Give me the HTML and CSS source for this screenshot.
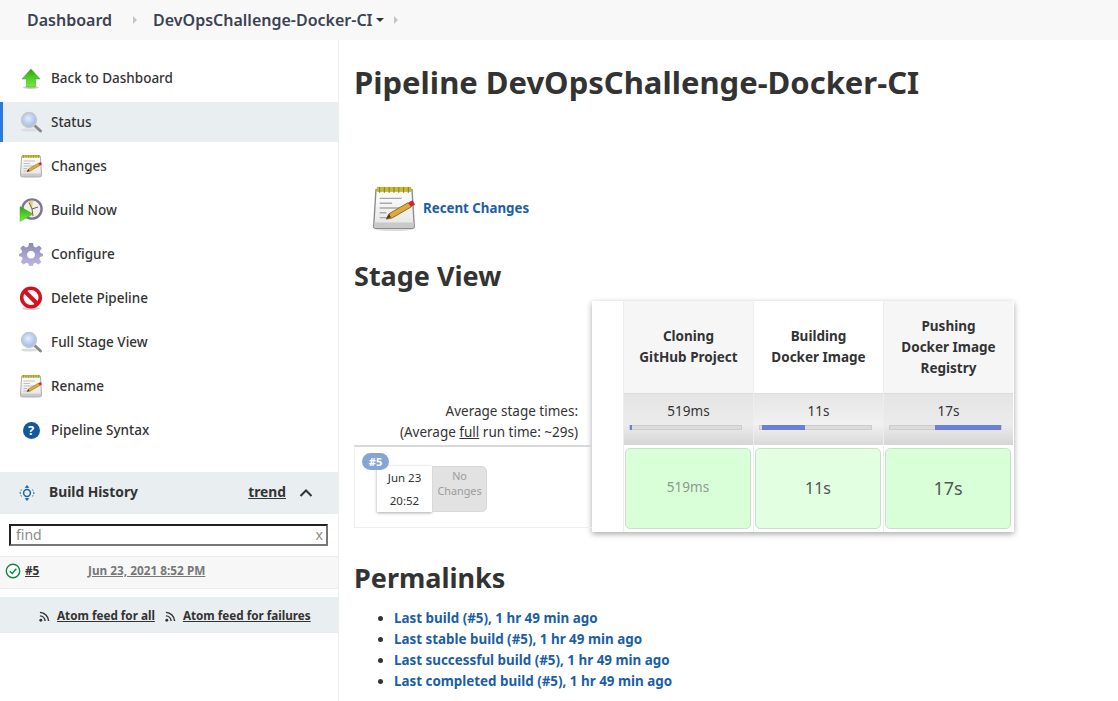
FILE: index.html
```html
<!DOCTYPE html>
<html lang="en">
<head>
<meta charset="utf-8">
<title>DevOpsChallenge-Docker-CI</title>
<link rel="stylesheet" href="styles.css">
</head>
<body>
<svg class="defs" width="0" height="0" aria-hidden="true">
  <defs>
    <linearGradient id="gGreen" x1="0" y1="0" x2="0" y2="1"><stop offset="0" stop-color="#2f9e1a"/><stop offset=".5" stop-color="#4ccf22"/><stop offset="1" stop-color="#7fe83f"/></linearGradient>
    <linearGradient id="gPaper" x1="0" y1="0" x2="0" y2="1"><stop offset="0" stop-color="#fff"/><stop offset="1" stop-color="#e4e4e4"/></linearGradient>
    <linearGradient id="gPurple" x1="0" y1="0" x2="0" y2="1"><stop offset="0" stop-color="#8c88bd"/><stop offset="1" stop-color="#bdb8dc"/></linearGradient>
    <radialGradient id="gLens" cx=".45" cy=".4" r=".7"><stop offset="0" stop-color="#e4edfa"/><stop offset="1" stop-color="#8fb0e6"/></radialGradient>
    <symbol id="i-up" viewBox="0 0 24 24">
      <ellipse cx="12" cy="21.5" rx="8" ry="1.5" fill="#ccc"/>
      <path d="M12 3 21 13H16.5V21H7.5V13H3Z" fill="url(#gGreen)" stroke="#3a9e24" stroke-width=".5"/>
    </symbol>
    <symbol id="i-search" viewBox="0 0 24 24">
      <ellipse cx="10" cy="20" rx="8" ry="1.6" fill="#ddd"/>
      <path d="M14.5 14.5 21.5 21" stroke="#8a8a8a" stroke-width="3" stroke-linecap="round"/>
      <circle cx="10" cy="10" r="7.3" fill="url(#gLens)" stroke="#c4c8d0" stroke-width="1.8"/>
    </symbol>
    <symbol id="i-notepad" viewBox="0 0 24 24">
      <ellipse cx="12" cy="23" rx="10" ry="1" fill="#ddd"/>
      <path d="M2.6 2.5H21.4L22.6 21.5Q22.6 22.6 21.4 22.6H2.6Q1.4 22.6 1.4 21.5Z" fill="url(#gPaper)" stroke="#8a8a8a" stroke-width=".7"/>
      <path d="M1.6 19.5H22.4V21.6Q22.4 22.4 21.4 22.4H2.6Q1.6 22.4 1.6 21.6Z" fill="#c9c9c9"/>
      <rect x="3" y="1" width="18" height="2.6" fill="#c9b832"/>
      <path d="M4.5 1V4M7 1V4M9.5 1V4M12 1V4M14.5 1V4M17 1V4M19.5 1V4" stroke="#8f8430" stroke-width=".6"/>
      <path d="M4.5 7H16M4.5 9.5H11M4.5 12H15M4.5 14.5H8M4.5 17H11" stroke="#a9a9a9" stroke-width=".7"/>
      <path d="M8 17.8 9.4 15 19.4 9.2 21 11.4 11 17.2Z" fill="#e0a93a" stroke="#8f6a1c" stroke-width=".5"/>
      <path d="M19.4 9.2 21.6 8 23 10.2 21 11.4Z" fill="#d8202c"/>
      <path d="M8 17.8 9.4 15 10.4 16.8Z" fill="#4b3a1a"/>
    </symbol>
    <symbol id="i-clock" viewBox="0 0 24 24">
      <circle cx="13" cy="11" r="9.6" fill="#f3efe6" stroke="#7d7597" stroke-width="2.4"/>
      <path d="M13 11 9.5 3.500A8 8 0 0 1 14 3Z" fill="#e6d65f"/>
      <path d="M13 11 10 4.5M13 11 19 9M13 11 14 18" stroke="#555" stroke-width=".9"/>
      <path d="M1 8.500 14 16 1 23.500Z" fill="url(#gGreen)" stroke="#3c9a27" stroke-width=".4"/>
    </symbol>
    <symbol id="i-gear" viewBox="0 0 24 24">
      <path fill-rule="evenodd" fill="url(#gPurple)" d="M10 1H14L14.7 4.4 17 5.4 20 3.5 22.8 6.3 20.7 9.2 21.6 11 24 12 24 14 21 15 20.3 17 22.3 20 19.5 22.6 16.6 20.7 14.6 21.6 14 24H10L9.4 21.6 7.4 20.7 4.5 22.6 1.7 20 3.7 17 3 15 0 14V12L2.4 11 3.3 9.2 1.2 6.3 4 3.5 7 5.4 9.3 4.4ZM12 8.800A3.900 3.900 0 1 0 12.01 8.800Z"/>
    </symbol>
    <symbol id="i-stop" viewBox="0 0 24 24">
      <ellipse cx="12" cy="22.4" rx="9" ry="1.4" fill="#ccc"/>
      <circle cx="12" cy="11.5" r="9.300" fill="#fff" stroke="#d4121f" stroke-width="3.500"/>
      <path d="M5.5 5 18.5 18" stroke="#d4121f" stroke-width="4"/>
    </symbol>
    <symbol id="i-rss" viewBox="0 0 12 12">
      <circle cx="2" cy="10" r="1.6" fill="#333"/>
      <path d="M1 5.3A6 6 0 0 1 6.7 11M1 1.5A10 10 0 0 1 10.5 11" fill="none" stroke="#333" stroke-width="1.6"/>
    </symbol>
  </defs>
</svg>

<header class="crumbs">
  <a class="crumb" href="#">Dashboard</a>
  <span class="crumb-sep"></span>
  <a class="crumb" href="#">DevOpsChallenge-Docker-CI</a>
  <span class="crumb-caret"></span>
  <span class="crumb-sep crumb-sep-end"></span>
</header>

<div class="layout">
  <aside class="side">
    <nav class="tasks">
      <a class="task" href="#"><svg class="task-icon"><use href="#i-up"/></svg>Back to Dashboard</a>
      <a class="task task-active" href="#"><svg class="task-icon"><use href="#i-search"/></svg>Status</a>
      <a class="task" href="#"><svg class="task-icon"><use href="#i-notepad"/></svg>Changes</a>
      <a class="task" href="#"><svg class="task-icon"><use href="#i-clock"/></svg>Build Now</a>
      <a class="task" href="#"><svg class="task-icon"><use href="#i-gear"/></svg>Configure</a>
      <a class="task" href="#"><svg class="task-icon"><use href="#i-stop"/></svg>Delete Pipeline</a>
      <a class="task" href="#"><svg class="task-icon"><use href="#i-search"/></svg>Full Stage View</a>
      <a class="task" href="#"><svg class="task-icon"><use href="#i-notepad"/></svg>Rename</a>
      <a class="task" href="#"><span class="task-help"><span class="help-mark">?</span></span>Pipeline Syntax</a>
    </nav>

    <section class="history">
      <div class="history-head">
        <svg class="history-icon" viewBox="0 0 16 16"><circle cx="8" cy="8" r="3.4" fill="none" stroke="#1b64a8" stroke-width="1.5"/><path d="M8 .6 9.5 2.4H6.500ZM8 15.400 6.500 13.600H9.500ZM1.600 5.600 2.800 4.800M14.400 5.600 13.200 4.800M1.600 10.400 2.800 11.200M14.400 10.400 13.200 11.200M1.200 7V9M14.800 7V9" fill="#1b64a8" stroke="#1b64a8" stroke-width="1"/></svg>
        <span class="history-title">Build History</span>
        <a class="history-trend" href="#">trend</a>
        <svg class="history-chevron" viewBox="0 0 14 10"><path d="M1.500 8 7 2.500 12.500 8" fill="none" stroke="#333" stroke-width="2"/></svg>
      </div>
      <div class="find">
        <div class="find-box"><span class="find-text">find</span><span class="find-x">x</span></div>
      </div>
      <div class="build-row">
        <svg class="build-status" viewBox="0 0 16 16"><circle cx="8" cy="8" r="6.700" fill="#fff" stroke="#138347" stroke-width="1.400"/><path d="M4.800 8.200 7.200 10.500 11.300 5.800" fill="none" stroke="#138347" stroke-width="1.500"/></svg>
        <a class="build-num" href="#">#5</a>
        <a class="build-date" href="#">Jun 23, 2021 8:52 PM</a>
      </div>
      <div class="feeds">
        <svg class="feed-icon"><use href="#i-rss"/></svg><a class="feed-link" href="#">Atom feed for all</a>
        <svg class="feed-icon feed-icon-second"><use href="#i-rss"/></svg><a class="feed-link" href="#">Atom feed for failures</a>
      </div>
    </section>
  </aside>

  <main class="main">
    <h1 class="title">Pipeline DevOpsChallenge-Docker-CI</h1>
    <div class="recent">
      <svg class="recent-icon"><use href="#i-notepad"/></svg>
      <a class="link" href="#">Recent Changes</a>
    </div>
    <h2 class="heading">Stage View</h2>
    <div class="stage">
      <div class="stage-left">
        <div class="avg-label">
          <div>Average stage times:</div>
          <div>(Average <u>full</u> run time: ~29s)</div>
        </div>
        <div class="run">
          <span class="run-badge">#5</span>
          <div class="run-date"><span>Jun 23</span><span>20:52</span></div>
          <div class="run-changes">No<br>Changes</div>
        </div>
      </div>
      <div class="stage-card">
        <div class="blank"></div>
        <div class="col col-a">
          <div class="col-head">Cloning<br>GitHub Project</div>
          <div class="col-avg"><span>519ms</span><div class="bar"><i class="bar-fill" style="left:0;width:2%"></i></div></div>
          <div class="col-cell"><div class="cell cell-dim">519ms</div></div>
        </div>
        <div class="col col-b">
          <div class="col-head">Building<br>Docker Image</div>
          <div class="col-avg"><span>11s</span><div class="bar"><i class="bar-fill" style="left:1.500%;width:39%"></i></div></div>
          <div class="col-cell"><div class="cell cell-mid">11s</div></div>
        </div>
        <div class="col col-a">
          <div class="col-head">Pushing<br>Docker Image<br>Registry</div>
          <div class="col-avg"><span>17s</span><div class="bar"><i class="bar-fill" style="left:40.700%;width:59.300%"></i></div></div>
          <div class="col-cell"><div class="cell cell-big">17s</div></div>
        </div>
      </div>
    </div>
    <h2 class="heading heading-perma">Permalinks</h2>
    <ul class="permalinks">
      <li><a class="link" href="#">Last build (#5), 1 hr 49 min ago</a></li>
      <li><a class="link" href="#">Last stable build (#5), 1 hr 49 min ago</a></li>
      <li><a class="link" href="#">Last successful build (#5), 1 hr 49 min ago</a></li>
      <li><a class="link" href="#">Last completed build (#5), 1 hr 49 min ago</a></li>
    </ul>
  </main>
</div>
</body>
</html>
```
FILE: styles.css
```css
* { box-sizing: border-box; }
html, body { margin: 0; height: 100%; overflow: hidden; }
body {
  background: #fff;
  color: #333;
  font-family: "Noto Sans", "Open Sans", sans-serif;
  font-size: 13.500px;
}
a { color: inherit; }
.defs { position: absolute; }

.crumbs {
  height: 40px;
  background: #f8f8f8;
  display: flex;
  align-items: center;
  padding-left: 27px;
  font-size: 16px;
  font-weight: 600;
}
.crumb { color: #3b4252; text-decoration: none; }
.crumb-sep {
  width: 0; height: 0;
  margin: 0 16px 0 21px;
  border-left: 4px solid #c4c4c4;
  border-top: 4px solid transparent;
  border-bottom: 4px solid transparent;
}
.crumb-sep-end { margin: 0 0 0 10px; }
.crumb-caret {
  width: 0; height: 0;
  margin-left: 3px;
  border-top: 4px solid #333;
  border-left: 4px solid transparent;
  border-right: 4px solid transparent;
}

.layout { display: flex; height: 661px; }
.side { width: 339px; flex: none; border-right: 1px solid #eee; }
.main { flex: 1; padding: 0 0 0 15px; min-width: 0; }

.tasks { padding-top: 18px; display: flex; flex-direction: column; gap: 4px; }
.task {
  height: 40px;
  display: flex;
  align-items: center;
  padding-left: 19px;
  color: #333;
  text-decoration: none;
  font-weight: 500;
}
.task-active { background: #e9eef1; border-left: 3px solid #2a7ae2; padding-left: 16px; }
.task-icon { width: 24px; height: 24px; margin-right: 8px; flex: none; }
.task-help { width: 24px; height: 24px; margin-right: 8px; display: flex; align-items: center; justify-content: center; flex: none; }
.help-mark {
  width: 17px; height: 17px;
  border-radius: 50%;
  background: #14589c;
  color: #fff;
  font-size: 13px;
  font-weight: 700;
  line-height: 17px;
  text-align: center;
}

.history { margin-top: 22px; }
.history-head {
  height: 42px;
  background: #e9eef1;
  display: flex;
  align-items: center;
  padding-left: 19px;
  font-size: 13.800px;
}
.history-icon { width: 16px; height: 16px; margin-right: 14px; }
.history-title { font-weight: 700; flex: 1; margin-bottom: 4px; }
.history-trend { font-weight: 700; text-decoration: underline; margin: 0 13px 4px 0; }
.history-chevron { width: 14px; height: 10px; margin-right: 25px; }
.find { padding: 10px 10px 10px 9px; }
.find-box {
  height: 22px;
  border: 2px solid;
  border-color: #222 #767676 #767676 #222;
  background: #fff;
  display: flex;
  justify-content: space-between;
  align-items: center;
  padding: 0 3px 2px 5px;
  color: #8c8c8c;
  font-size: 14px;
}
.build-row {
  height: 33px;
  background: #f7f7f7;
  border-top: 1px solid #e9eef1;
  border-bottom: 1px solid #e9eef1;
  display: flex;
  align-items: center;
  padding: 0 0 6px 5px;
  font-size: 11.800px;
  font-weight: 700;
}
.build-status { width: 16px; height: 16px; margin: 3px 4px 0 0; }
.build-num { width: 63px; }
.build-date { color: #777; }
.feeds {
  margin-top: 8px;
  height: 36px;
  background: #e9eef1;
  display: flex;
  align-items: center;
  padding: 0 0 1px 39px;
  font-size: 11.700px;
  font-weight: 700;
}
.feed-icon { width: 11px; height: 11px; margin: 4px 7px 0 0; }
.feed-icon-second { margin-left: 10px; }

.title { font-size: 31px; font-weight: 700; margin: 0; padding-top: 23px; line-height: 38px; color: #333; }
.recent { display: flex; align-items: center; margin: 85px 0 0 17px; height: 44px; }
.recent-icon { width: 46px; height: 46px; margin-right: 6px; flex: none; }
.link { color: #1b5ea6; font-weight: 700; text-decoration: none; }
.recent .link { font-size: 13.300px; }
.heading { font-size: 27px; font-weight: 700; margin: 26px 0 0; line-height: 40px; }
.stage { display: flex; margin-top: 5px; }
.stage-left { width: 238px; flex: none; display: flex; flex-direction: column; justify-content: flex-end; padding-bottom: 4px; }
.avg-label { text-align: right; padding-right: 14px; line-height: 21px; padding-bottom: 2px; }
.run {
  position: relative;
  height: 83px;
  border: 1px solid #eee;
  border-top: 2px solid #d8d8d8;
  border-right: none;
  display: flex;
  align-items: flex-start;
  padding: 19px 0 0 22px;
}
.run-badge {
  position: absolute;
  left: 7px; top: 6px;
  width: 27px; height: 17px;
  border-radius: 9px;
  background: #86a5d2;
  color: #fff;
  font-size: 11px;
  font-weight: 700;
  line-height: 17px;
  text-align: center;
}
.run-date {
  width: 55px; height: 46px;
  background: #fff;
  box-shadow: 0 1px 3px rgba(0,0,0,.35);
  display: flex;
  flex-direction: column;
  justify-content: space-around;
  align-items: center;
  font-size: 11.500px;
  color: #333;
}
.run-changes {
  width: 55px; height: 46px;
  background: #e2e2e2;
  border-radius: 0 5px 5px 0;
  border: 1px solid #d8d8d8;
  color: #9c9c9c;
  font-size: 10.800px;
  line-height: 15px;
  text-align: center;
  padding-top: 1px;
}
.stage-card {
  display: flex;
  height: 231px;
  padding-right: 1px;
  background: #fff;
  box-shadow: 0 2px 6px rgba(0,0,0,.35);
}
.blank { width: 31px; }
.col { width: 130px; display: flex; flex-direction: column; border-left: 1px solid #eee; }
.col-a .col-head { background: #f6f6f6; }
.col-head {
  height: 92px;
  display: flex;
  align-items: center;
  justify-content: center;
  text-align: center;
  font-weight: 700;
  line-height: 21px;
  background: #fff;
}
.col-avg {
  height: 52px;
  background: linear-gradient(#e6e6e6, #f1f1f1 60%, #d9d9d9);
  border-top: 1px solid #ddd;
  text-align: center;
  padding-top: 7px;
  line-height: 20px;
}
.col-a .col-avg { background: linear-gradient(#e4e4e4, #ececec 60%, #d5d5d5); }
.bar { position: relative; height: 5px; margin: 4px 11px 0 5px; background: #dcdcdc; border: 1px solid #ccc; }
.bar-fill { position: absolute; top: -1px; height: 5px; background: #6c7fd6; }
.col-cell { flex: 1; padding: 3px 2px 3px 1px; }
.cell {
  height: 100%;
  border: 1px solid #c8e0c8;
  border-radius: 5px;
  background: #d9ffd9;
  display: flex;
  align-items: center;
  justify-content: center;
  padding-bottom: 2px;
  color: #555;
}
.cell-dim { color: #8a9a8a; font-size: 13.500px; padding-bottom: 3px; }
.cell-mid { background: #e2ffe2; font-size: 16px; }
.cell-big { font-size: 18px; }
.heading-perma { margin-top: 26px; }
.permalinks { margin: 10px 0 0; padding-left: 40px; line-height: 21px; font-size: 13.400px; }
```
